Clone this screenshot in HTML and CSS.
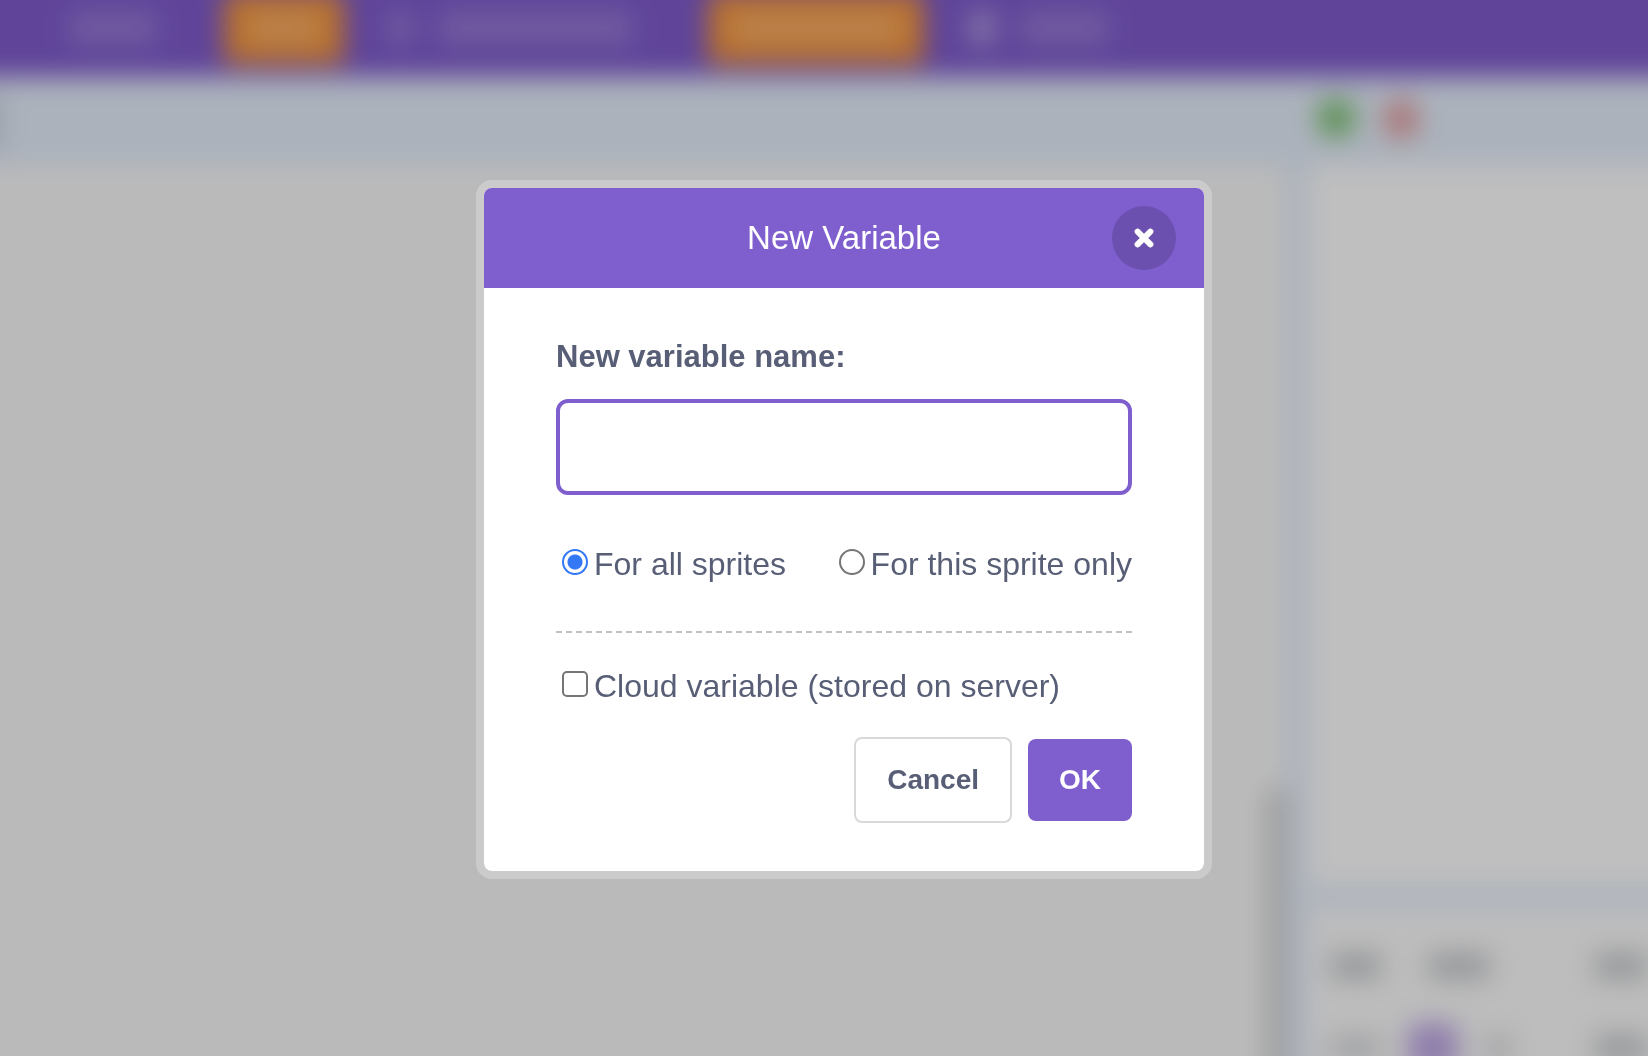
FILE: index.html
```html
<!DOCTYPE html>
<html lang="en">
<head>
<meta charset="utf-8">
<title>New Variable</title>
<meta name="viewport" content="width=device-width, initial-scale=1">
<link rel="stylesheet" href="styles.css">
</head>
<body>
<div class="editor" aria-hidden="true">
  <div class="menu-bar">
    <span class="menu-item menu-edit"></span>
    <span class="menu-button menu-button-small"><span class="menu-fill"></span></span>
    <span class="menu-item menu-icon"></span>
    <span class="menu-item menu-title"></span>
    <span class="menu-button menu-button-large"><span class="menu-fill"></span></span>
    <span class="menu-item menu-icon menu-icon-bright"></span>
    <span class="menu-item menu-link"></span>
  </div>
  <div class="tool-bar">
    <span class="tab-edge"></span>
    <div class="stage-controls">
      <span class="flag"></span>
      <span class="stop"></span>
    </div>
  </div>
  <div class="main">
    <div class="workspace"><span class="scrollbar"></span></div>
    <div class="side">
      <div class="stage"></div>
      <div class="sprite-info">
        <div class="info-row">
          <span class="chip chip-medium"></span>
          <span class="chip chip-wide"></span>
          <span class="chip chip-end"></span>
        </div>
        <div class="info-row info-row-tight">
          <span class="chip chip-medium chip-faint"></span>
          <span class="chip chip-accent"></span>
          <span class="chip chip-small chip-faint"></span>
          <span class="chip chip-end"></span>
        </div>
      </div>
    </div>
  </div>
</div>

<div class="overlay">
  <form class="dialog" role="dialog" aria-modal="true" aria-labelledby="dialog-title">
    <header class="dialog-header">
      <h1 class="dialog-title" id="dialog-title">New Variable</h1>
      <button class="close" type="button" aria-label="Close">
        <svg width="20" height="20" viewBox="0 0 20 20" fill="none" stroke="#fff" stroke-width="6" stroke-linecap="round"><path d="M3.6 3.6 16.4 16.4M16.4 3.6 3.6 16.4"/></svg>
      </button>
    </header>
    <div class="dialog-body">
      <label class="name-label" for="variable-name">New variable name:</label>
      <input class="name-input" id="variable-name" type="text" autocomplete="off">
      <div class="scope">
        <label class="option"><input class="tick tick-radio" type="radio" name="scope" checked>For all sprites</label>
        <label class="option"><input class="tick tick-radio" type="radio" name="scope">For this sprite only</label>
      </div>
      <div class="cloud">
        <label class="option"><input class="tick tick-box" type="checkbox" name="cloud">Cloud variable (stored on server)</label>
      </div>
      <div class="actions">
        <button class="button button-cancel" type="button">Cancel</button>
        <button class="button button-ok" type="submit">OK</button>
      </div>
    </div>
  </form>
</div>
</body>
</html>
```

FILE: styles.css
```css
* {
  box-sizing: border-box;
}

body {
  margin: 0;
  overflow: hidden;
  font-family: "Liberation Sans", Arial, Helvetica, sans-serif;
  font-size: 32px;
  line-height: 36px;
  color: #575e75;
}

/* Editor behind the dialog. It reaches 40px past the window on every
   side, so that the blur has no soft rim at the window's edge. */
.editor {
  position: fixed;
  inset: -40px;
  display: flex;
  flex-direction: column;
  background: #e5eefb;
  filter: blur(13px);
}

.menu-bar {
  display: flex;
  align-items: center;
  flex-shrink: 0;
  height: 117px;
  padding: 18px 0 0 108px;
  background: #7f5bcd;
}

.menu-item {
  height: 36px;
  border-radius: 8px;
  background: rgba(255, 255, 255, 0.18);
}

.menu-edit {
  width: 90px;
  margin-right: 66px;
}

.menu-button {
  display: flex;
  align-items: center;
  height: 72px;
  padding: 0 24px;
  border-radius: 8px;
  background: #f7963a;
}

.menu-fill {
  flex: 1;
  height: 28px;
  background: rgba(255, 255, 255, 0.25);
}

.menu-button-small {
  width: 120px;
  margin-right: 42px;
}

.menu-icon {
  width: 28px;
  margin-right: 24px;
}

.menu-icon-bright {
  background: rgba(255, 255, 255, 0.36);
}

.menu-title {
  width: 196px;
  margin-right: 74px;
}

.menu-button-large {
  width: 216px;
  margin-right: 44px;
}

.menu-link {
  width: 90px;
}

.tool-bar {
  display: flex;
  align-items: center;
  justify-content: space-between;
  flex-shrink: 0;
  height: 89px;
}

.tab-edge {
  width: 42px;
  height: 56px;
  background: #cfd6e2;
}

.stage-controls {
  display: flex;
  gap: 30px;
  width: 370px;
  padding-bottom: 6px;
}

.flag {
  width: 36px;
  height: 36px;
  border-radius: 8px;
  background: #80c476;
}

.stop {
  width: 34px;
  height: 38px;
  border-radius: 12px;
  background: #e2a0a2;
}

.main {
  display: flex;
  flex: 1;
  gap: 22px;
  min-height: 0;
}

.workspace {
  display: flex;
  flex: 1;
  align-items: flex-end;
  justify-content: flex-end;
  background: #f9f9f9;
}

.scrollbar {
  width: 20px;
  height: 33%;
  background: #d2d2d2;
}

.side {
  display: flex;
  flex-direction: column;
  gap: 20px;
  width: 380px;
}

.stage {
  flex: 1;
  background: #fff;
}

.sprite-info {
  display: flex;
  flex-direction: column;
  gap: 54px;
  height: 190px;
  padding: 46px 40px 0 22px;
  background: #fcfcfc;
}

.info-row {
  display: flex;
  align-items: center;
  height: 28px;
  gap: 46px;
}

.info-row-tight {
  gap: 26px;
}

.chip {
  height: 28px;
  border-radius: 8px;
  background: #cbcdd0;
}

.chip-medium {
  width: 52px;
}

.chip-wide {
  width: 62px;
}

.chip-small {
  width: 28px;
}

.chip-accent {
  width: 50px;
  height: 50px;
  background: #bfa8e6;
}

.chip-faint {
  background: #dcdde0;
}

.chip-end {
  width: 54px;
  margin-left: auto;
}

/* Dialog */
.overlay {
  position: fixed;
  inset: 0;
  display: flex;
  align-items: flex-start;
  justify-content: center;
  padding: 180px 0 0 40px;
  background: rgba(0, 0, 0, 0.25);
}

.dialog {
  width: 736px;
  border: 8px solid rgba(255, 255, 255, 0.25);
  border-radius: 16px;
  background: #fff;
  background-clip: padding-box;
}

.dialog-header {
  display: grid;
  grid-template-columns: 64px 1fr 64px;
  align-items: center;
  height: 100px;
  padding: 0 28px;
  border-radius: 8px 8px 0 0;
  background: #7f5ece;
  color: #fff;
}

.dialog-title {
  grid-column: 2;
  margin: 0;
  font-size: 33px;
  font-weight: 400;
  text-align: center;
}

.close {
  display: flex;
  align-items: center;
  justify-content: center;
  width: 64px;
  height: 64px;
  padding: 0;
  border: 0;
  border-radius: 50%;
  background: #6c50af;
}

.dialog-body {
  padding: 51px 72px 48px;
}

.name-label {
  display: block;
  margin-bottom: 24px;
  font-size: 31px;
  font-weight: 700;
}

.name-input {
  display: block;
  width: 100%;
  height: 96px;
  padding: 0 24px;
  border: 4px solid #7f5ece;
  border-radius: 12px;
  outline: 0;
  background: #fff;
  color: inherit;
  font: inherit;
}

.scope {
  display: flex;
  justify-content: space-between;
  padding: 51px 0 49px;
  border-bottom: 2px dashed #bfbfbf;
}

.option {
  display: flex;
  align-items: flex-start;
}

.tick {
  appearance: none;
  width: 26px;
  height: 26px;
  margin: 3px 6px 0;
  border: 2px solid #767676;
  background: #fff;
}

.tick-radio {
  border-radius: 50%;
}

.tick-radio:checked {
  border-color: #3478f6;
  background: radial-gradient(circle, #3478f6 0 7px, #fff 8px);
}

.tick-box {
  border-radius: 5px;
}

.tick-box:checked {
  border-color: #3478f6;
  background: #3478f6;
}

.cloud {
  padding: 35px 0 33px;
}

.actions {
  display: flex;
  align-items: center;
  justify-content: flex-end;
  gap: 16px;
}

.button {
  height: 82px;
  padding: 0 31px;
  border: 0;
  border-radius: 8px;
  font: inherit;
  font-size: 28px;
  font-weight: 700;
}

.button-cancel {
  height: 86px;
  border: 2px solid #d9d9d9;
  background: #fff;
  color: #575e75;
}

.button-ok {
  background: #7f5ece;
  color: #fff;
}
```
